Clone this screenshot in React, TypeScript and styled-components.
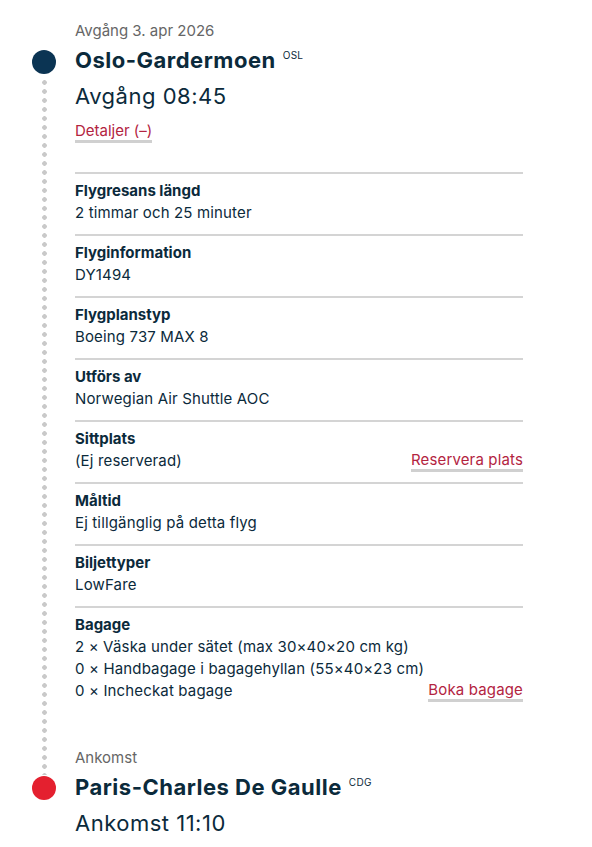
import styled, { createGlobalStyle } from 'styled-components'

const GlobalStyle = createGlobalStyle`
  body {
    margin: 0;
    background: #fff;
    font-family: Inter, "Noto Sans", "Liberation Sans", sans-serif;
    color: #0b2a3b;
  }
`

interface Row {
  label: string
  values: string[]
  action?: string
}

const rows: Row[] = [
  { label: 'Flygresans längd', values: ['2 timmar och 25 minuter'] },
  { label: 'Flyginformation', values: ['DY1494'] },
  { label: 'Flygplanstyp', values: ['Boeing 737 MAX 8'] },
  { label: 'Utförs av', values: ['Norwegian Air Shuttle AOC'] },
  { label: 'Sittplats', values: ['(Ej reserverad)'], action: 'Reservera plats' },
  { label: 'Måltid', values: ['Ej tillgänglig på detta flyg'] },
  { label: 'Biljettyper', values: ['LowFare'] },
  {
    label: 'Bagage',
    values: [
      '2 × Väska under sätet (max 30×40×20 cm kg)',
      '0 × Handbagage i bagagehyllan (55×40×23 cm)',
      '0 × Incheckat bagage',
    ],
    action: 'Boka bagage',
  },
]

export default function App() {
  return (
    <>
      <GlobalStyle />
      <Page>
        <Rail>
          <Dot color="#0b3453" />
          <Dotted />
          <Dot color="#e4202f" />
        </Rail>
        <Content>
          <Caption>Avgång 3. apr 2026</Caption>
          <Station>
            Oslo-Gardermoen<Code>OSL</Code>
          </Station>
          <Time>Avgång 08:45</Time>
          <Toggle>
            <Link>Detaljer (–)</Link>
          </Toggle>
          <Details>
            {rows.map((row) => (
              <DetailRow key={row.label}>
                <Label>{row.label}</Label>
                {row.values.map((v, i) => (
                  <ValueLine key={v}>
                    <span>{v}</span>
                    {row.action && i === row.values.length - 1 && (
                      <Link>{row.action}</Link>
                    )}
                  </ValueLine>
                ))}
              </DetailRow>
            ))}
          </Details>
          <Arrival>
            <Caption>Ankomst</Caption>
            <Station>
              Paris-Charles De Gaulle<Code>CDG</Code>
            </Station>
            <Time>Ankomst 11:10</Time>
          </Arrival>
        </Content>
      </Page>
    </>
  )
}

const Page = styled.div`
  display: grid;
  grid-template-columns: 24px 448px;
  column-gap: 19px;
  padding: 20px 0 8px 32px;
`

const Rail = styled.div`
  display: flex;
  flex-direction: column;
  align-items: center;
  padding-top: 30px;
  padding-bottom: 39px;
`

const Dot = styled.div<{ color: string }>`
  width: 24px;
  height: 24px;
  border-radius: 50%;
  background: ${(p) => p.color};
  flex-shrink: 0;
`

const Dotted = styled.div`
  flex: 1;
  width: 9px;
  margin: 4px 0 1px;
  background-image: radial-gradient(circle at center, #c9c9c9 2px, transparent 2.6px);
  background-size: 9px 9px;
  background-repeat: repeat-y;
`

const Content = styled.div`
  display: flex;
  flex-direction: column;
`

const Caption = styled.div`
  font-size: 15px;
  line-height: 22px;
  color: #666;
`

const Station = styled.div`
  margin-top: 2px;
  font-size: 22px;
  line-height: 32px;
  font-weight: 700;
  letter-spacing: 0.5px;
  color: #0b2a3b;
`

const Code = styled.sup`
  font-size: 10px;
  font-weight: 400;
  letter-spacing: 0.3px;
  line-height: 0;
  vertical-align: 9px;
  margin-left: 7px;
`

const Time = styled.div`
  margin-top: 4px;
  font-size: 22px;
  line-height: 32px;
  letter-spacing: 0.5px;
  color: #0b2a3b;
`

const Toggle = styled.div`
  display: flex;
  margin-top: 9px;
`

const Link = styled.span`
  display: inline-block;
  font-size: 15px;
  line-height: 19px;
  color: #b3243f;
  border-bottom: 3px solid #d0d0d0;
`

const Details = styled.div`
  margin-top: 29px;
`

const DetailRow = styled.div`
  border-top: 2px solid #d4d4d4;
  padding: 6px 0 10px;
  &:last-child {
    padding-bottom: 0;
  }
`

const Label = styled.div`
  font-size: 15px;
  line-height: 22px;
  font-weight: 700;
`

const ValueLine = styled.div`
  display: flex;
  justify-content: space-between;
  align-items: flex-start;
  font-size: 15px;
  line-height: 22px;
  letter-spacing: 0.15px;
`

const Arrival = styled.div`
  margin-top: 45px;
`
